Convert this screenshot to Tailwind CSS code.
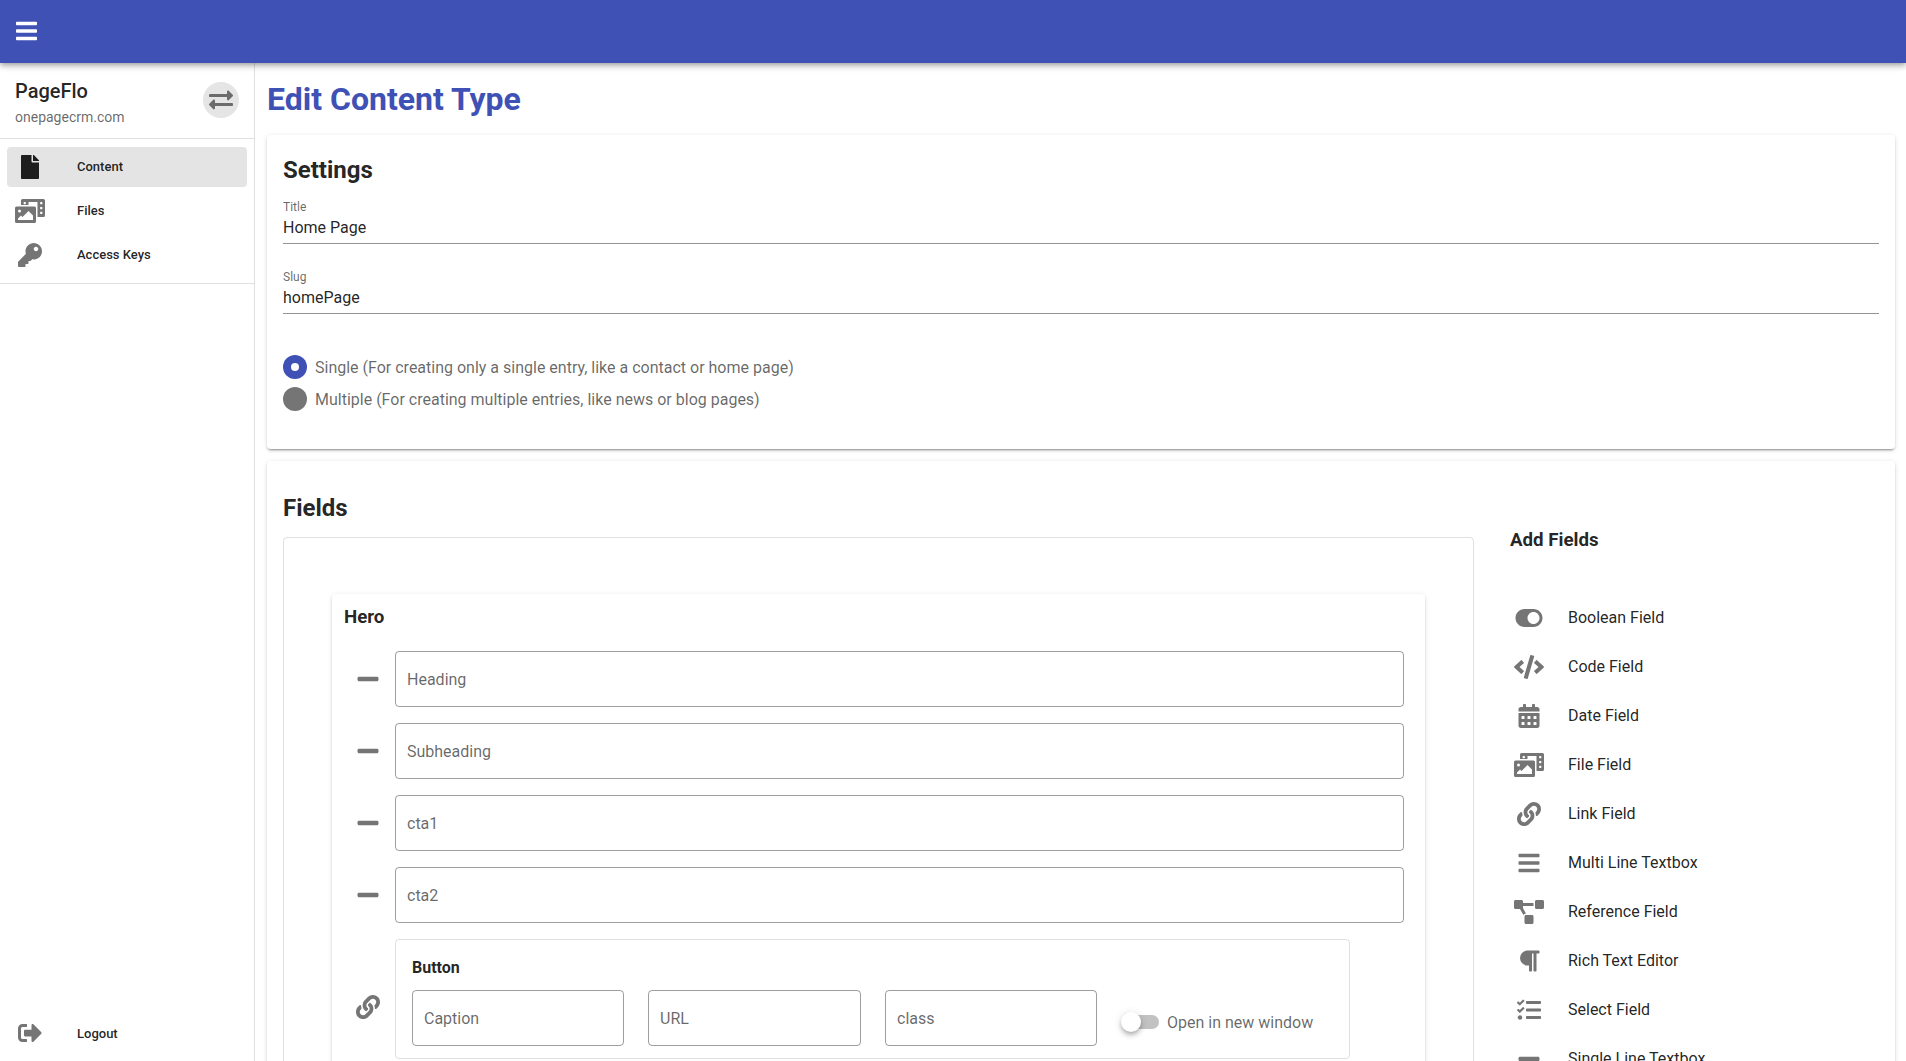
<!DOCTYPE html>
<html lang="en">
<head>
<meta charset="utf-8">
<title>Edit Content Type</title>
<script src="https://cdn.jsdelivr.net/npm/@tailwindcss/browser@4"></script>
</head>
<body class="h-[1061px] overflow-hidden bg-white font-[Roboto,sans-serif] text-base text-black/87">
<svg class="hidden">
  <symbol id="bars" viewBox="0 0 448 512"><path d="M16 132h416c8.837 0 16-7.163 16-16V76c0-8.837-7.163-16-16-16H16C7.163 60 0 67.163 0 76v40c0 8.837 7.163 16 16 16zm0 160h416c8.837 0 16-7.163 16-16v-40c0-8.837-7.163-16-16-16H16c-8.837 0-16 7.163-16 16v40c0 8.837 7.163 16 16 16zm0 160h416c8.837 0 16-7.163 16-16v-40c0-8.837-7.163-16-16-16H16c-8.837 0-16 7.163-16 16v40c0 8.837 7.163 16 16 16z"/></symbol>
  <symbol id="exchange" viewBox="0 0 512 512"><path d="M0 168v-16c0-13.255 10.745-24 24-24h360V80c0-21.367 25.899-32.042 40.971-16.971l80 80c9.372 9.373 9.372 24.569 0 33.941l-80 80C409.956 271.982 384 261.456 384 240v-48H24c-13.255 0-24-10.745-24-24zm488 152H128v-48c0-21.314-25.862-32.08-40.971-16.971l-80 80c-9.372 9.373-9.372 24.569 0 33.941l80 80C102.057 463.997 128 453.437 128 432v-48h360c13.255 0 24-10.745 24-24v-16c0-13.255-10.745-24-24-24z"/></symbol>
  <symbol id="file" viewBox="0 0 384 512"><path d="M224 136V0H24C10.7 0 0 10.7 0 24v464c0 13.3 10.7 24 24 24h336c13.3 0 24-10.7 24-24V160H248c-13.2 0-24-10.8-24-24zm160-14.1v6.1H256V0h6.1c6.400 0 12.500 2.500 17 7l97.900 98c4.500 4.500 7 10.600 7 16.900z"/></symbol>
  <symbol id="media" viewBox="0 0 640 512"><path d="M608 0H160a32 32 0 0 0-32 32v96h160V64h192v320h128a32 32 0 0 0 32-32V32a32 32 0 0 0-32-32zM232 103a9 9 0 0 1-9 9h-30a9 9 0 0 1-9-9V73a9 9 0 0 1 9-9h30a9 9 0 0 1 9 9zm352 208a9 9 0 0 1-9 9h-30a9 9 0 0 1-9-9v-30a9 9 0 0 1 9-9h30a9 9 0 0 1 9 9zm0-104a9 9 0 0 1-9 9h-30a9 9 0 0 1-9-9v-30a9 9 0 0 1 9-9h30a9 9 0 0 1 9 9zm0-104a9 9 0 0 1-9 9h-30a9 9 0 0 1-9-9V73a9 9 0 0 1 9-9h30a9 9 0 0 1 9 9zm-168 57H32a32 32 0 0 0-32 32v288a32 32 0 0 0 32 32h384a32 32 0 0 0 32-32V192a32 32 0 0 0-32-32zM96 224a32 32 0 1 1-32 32 32 32 0 0 1 32-32zm288 224H64v-32l64-64 32 32 128-128 96 96z"/></symbol>
  <symbol id="key" viewBox="0 0 512 512"><path d="M512 176.001C512 273.203 433.202 352 336 352c-11.220 0-22.190-1.062-32.827-3.069l-24.012 27.014A23.999 23.999 0 0 1 261.223 384H224v40c0 13.255-10.745 24-24 24h-40v40c0 13.255-10.745 24-24 24H24c-13.255 0-24-10.745-24-24v-78.059c0-6.365 2.529-12.470 7.029-16.971l161.802-161.802C163.108 213.814 160 195.271 160 176 160 78.798 238.797.001 335.999 0 433.488-.001 512 78.511 512 176.001zM336 128c0 26.510 21.490 48 48 48s48-21.490 48-48-21.490-48-48-48-48 21.490-48 48z"/></symbol>
  <symbol id="logout" viewBox="0 0 512 512"><path d="M497 273L329 441c-15 15-41 4.500-41-17v-96H152c-13.300 0-24-10.700-24-24v-96c0-13.300 10.700-24 24-24h136V88c0-21.400 25.900-32 41-17l168 168c9.300 9.400 9.300 24.600 0 34zM192 436v-40c0-6.600-5.400-12-12-12H96c-17.700 0-32-14.300-32-32V160c0-17.700 14.300-32 32-32h84c6.600 0 12-5.400 12-12V76c0-6.600-5.400-12-12-12H96c-53 0-96 43-96 96v192c0 53 43 96 96 96h84c6.600 0 12-5.400 12-12z"/></symbol>
  <symbol id="minus" viewBox="0 0 448 512"><path d="M416 208H32c-17.670 0-32 14.330-32 32v32c0 17.670 14.330 32 32 32h384c17.670 0 32-14.330 32-32v-32c0-17.670-14.330-32-32-32z"/></symbol>
  <symbol id="link" viewBox="0 0 512 512"><path d="M326.612 185.391c59.747 59.809 58.927 155.698.36 214.590-.11.12-.24.25-.36.37l-67.200 67.200c-59.270 59.270-155.699 59.262-214.960 0-59.270-59.260-59.270-155.700 0-214.960l37.106-37.106c9.840-9.840 26.786-3.300 27.294 10.606.648 17.722 3.826 35.527 9.690 52.721 1.986 5.822.567 12.262-3.783 16.612l-13.087 13.087c-28.026 28.026-28.905 73.660-1.155 101.960 28.024 28.579 74.086 28.749 102.325.51l67.200-67.190c28.191-28.191 28.073-73.757 0-101.830-3.701-3.694-7.429-6.564-10.341-8.569a16.037 16.037 0 0 1-6.947-12.606c-.396-10.567 3.348-21.456 11.698-29.806l21.054-21.055c5.521-5.521 14.182-6.199 20.584-1.731a152.482 152.482 0 0 1 20.522 17.197zM467.547 44.449c-59.261-59.262-155.690-59.270-214.960 0l-67.200 67.200c-.12.12-.25.25-.36.37-58.566 58.892-59.387 154.781.36 214.590a152.454 152.454 0 0 0 20.521 17.196c6.402 4.468 15.064 3.789 20.584-1.731l21.054-21.055c8.350-8.350 12.094-19.239 11.698-29.806a16.037 16.037 0 0 0-6.947-12.606c-2.912-2.005-6.640-4.875-10.341-8.569-28.073-28.073-28.191-73.639 0-101.830l67.200-67.190c28.239-28.239 74.300-28.069 102.325.51 27.750 28.300 26.872 73.934-1.155 101.960l-13.087 13.087c-4.350 4.350-5.769 10.790-3.783 16.612 5.864 17.194 9.042 34.999 9.690 52.721.509 13.906 17.454 20.446 27.294 10.606l37.106-37.106c59.271-59.259 59.271-155.699.001-214.959z"/></symbol>
  <symbol id="toggle" viewBox="0 0 576 512"><path d="M384 64H192C86 64 0 150 0 256s86 192 192 192h192c106 0 192-86 192-192S490 64 384 64zm0 320c-70.800 0-128-57.300-128-128 0-70.800 57.300-128 128-128 70.800 0 128 57.300 128 128 0 70.800-57.300 128-128 128z"/></symbol>
  <symbol id="code" viewBox="0 0 640 512"><path d="M278.900 511.500l-61-17.700c-6.400-1.800-10-8.500-8.200-14.900L346.200 8.700c1.800-6.400 8.500-10 14.900-8.200l61 17.700c6.400 1.800 10 8.500 8.200 14.900L293.800 503.300c-1.900 6.400-8.500 10.100-14.900 8.200zm-114-112.200l43.500-46.400c4.600-4.900 4.300-12.700-.8-17.200L117 256l90.600-79.700c5.100-4.500 5.500-12.300.8-17.200l-43.500-46.400c-4.500-4.800-12.100-5.100-17-.5L3.800 247.200c-5.100 4.700-5.100 12.800 0 17.500l144.100 135.100c4.900 4.600 12.500 4.400 17-.5zm327.200.6l144.100-135.100c5.100-4.700 5.100-12.800 0-17.500L492.100 112.100c-4.800-4.500-12.400-4.300-17 .5L431.600 159c-4.600 4.900-4.300 12.700.8 17.200L523 256l-90.600 79.700c-5.100 4.500-5.500 12.300-.8 17.200l43.500 46.400c4.500 4.900 12.100 5.100 17 .6z"/></symbol>
  <symbol id="calendar" viewBox="0 0 448 512"><path fill-rule="evenodd" d="M0 464c0 26.500 21.500 48 48 48h352c26.500 0 48-21.500 48-48V192H0zM76 256h40a12 12 0 0 1 12 12v40a12 12 0 0 1-12 12H76a12 12 0 0 1-12-12v-40a12 12 0 0 1 12-12zM204 256h40a12 12 0 0 1 12 12v40a12 12 0 0 1-12 12h-40a12 12 0 0 1-12-12v-40a12 12 0 0 1 12-12zM332 256h40a12 12 0 0 1 12 12v40a12 12 0 0 1-12 12h-40a12 12 0 0 1-12-12v-40a12 12 0 0 1 12-12zM76 384h40a12 12 0 0 1 12 12v40a12 12 0 0 1-12 12H76a12 12 0 0 1-12-12v-40a12 12 0 0 1 12-12zM204 384h40a12 12 0 0 1 12 12v40a12 12 0 0 1-12 12h-40a12 12 0 0 1-12-12v-40a12 12 0 0 1 12-12zM332 384h40a12 12 0 0 1 12 12v40a12 12 0 0 1-12 12h-40a12 12 0 0 1-12-12v-40a12 12 0 0 1 12-12zM400 64h-48V16c0-8.800-7.200-16-16-16h-32c-8.800 0-16 7.200-16 16v48H160V16c0-8.800-7.200-16-16-16h-32c-8.800 0-16 7.200-16 16v48H48C21.500 64 0 85.500 0 112v48h448v-48c0-26.500-21.500-48-48-48z"/></symbol>
  <symbol id="diagram" viewBox="0 0 640 512"><path d="M384 320H256c-17.670 0-32 14.330-32 32v128c0 17.670 14.330 32 32 32h128c17.670 0 32-14.330 32-32V352c0-17.670-14.330-32-32-32zM192 32c0-17.670-14.330-32-32-32H32C14.330 0 0 14.330 0 32v128c0 17.670 14.330 32 32 32h95.720l73.160 128.040C211.980 300.980 232.400 288 256 288h.28L192 175.510V128h224V64H192V32zM608 0H480c-17.670 0-32 14.330-32 32v128c0 17.670 14.330 32 32 32h128c17.670 0 32-14.330 32-32V32c0-17.670-14.330-32-32-32z"/></symbol>
  <symbol id="paragraph" viewBox="0 0 448 512"><path d="M448 48v32a16 16 0 0 1-16 16h-48v368a16 16 0 0 1-16 16h-32a16 16 0 0 1-16-16V96h-32v368a16 16 0 0 1-16 16h-32a16 16 0 0 1-16-16V352h-32a160 160 0 0 1 0-320h240a16 16 0 0 1 16 16z"/></symbol>
  <symbol id="tasks" viewBox="0 0 512 512"><path d="M139.610 35.500a12 12 0 0 0-17 0L58.930 98.810l-22.700-22.120a12 12 0 0 0-17 0L3.530 92.410a12 12 0 0 0 0 17l47.590 47.400a12.780 12.780 0 0 0 17.610 0l15.590-15.620L156.520 69.090a12.090 12.090 0 0 0 .09-17zm0 159.190a12 12 0 0 0-17 0l-63.680 63.720-22.700-22.100a12 12 0 0 0-17 0L3.530 252a12 12 0 0 0 0 17L51 316.500a12.770 12.770 0 0 0 17.600 0l15.700-15.690 72.200-72.220a12 12 0 0 0 .09-16.900zM64 368c-26.490 0-48.590 21.500-48.590 48S37.530 464 64 464a48 48 0 0 0 0-96zm432 16H208a16 16 0 0 0-16 16v32a16 16 0 0 0 16 16h288a16 16 0 0 0 16-16v-32a16 16 0 0 0-16-16zm0-320H208a16 16 0 0 0-16 16v32a16 16 0 0 0 16 16h288a16 16 0 0 0 16-16V80a16 16 0 0 0-16-16zm0 160H208a16 16 0 0 0-16 16v32a16 16 0 0 0 16 16h288a16 16 0 0 0 16-16v-32a16 16 0 0 0-16-16z"/></symbol>
</svg>

<header class="relative z-10 flex h-[63px] items-center bg-[#3f51b5] px-4 text-white shadow-[0_2px_4px_-1px_rgba(0,0,0,0.2),0_4px_5px_rgba(0,0,0,0.14),0_1px_10px_rgba(0,0,0,0.12)]">
  <svg class="-mt-px h-6 w-[21px] fill-current"><use href="#bars"/></svg>
</header>

<div class="flex h-[998px]">
  <aside class="flex w-[255px] shrink-0 flex-col border-r border-black/12">
    <div class="flex h-[76px] items-center justify-between border-b border-black/12 px-[15px]">
      <div class="pt-1">
        <div class="text-xl leading-6 font-medium">PageFlo</div>
        <div class="mt-1 text-sm leading-5 text-black/60">onepagecrm.com</div>
      </div>
      <button class="-mt-0.5 flex size-9 items-center justify-center rounded-full bg-[#e5e5e5]"><svg class="size-6 fill-[#6b6b6b]"><use href="#exchange"/></svg></button>
    </div>
    <nav class="flex h-[145px] flex-col gap-1 border-b border-black/12 px-[7px] pt-2 text-[13px] font-medium">
      <a class="flex h-10 items-center rounded bg-[#e4e4e4] pl-2"><svg class="mr-8 h-6 w-[30px] fill-[#1e1e1e]"><use href="#file"/></svg>Content</a>
      <a class="flex h-10 items-center pl-2"><svg class="mr-8 h-6 w-[30px] fill-[#757575]"><use href="#media"/></svg>Files</a>
      <a class="flex h-10 items-center pl-2"><svg class="mr-8 h-6 w-[30px] fill-[#757575]"><use href="#key"/></svg>Access Keys</a>
    </nav>
    <a class="mt-auto mb-2 flex h-10 items-center pl-[15px] text-[13px] font-medium"><svg class="mr-8 h-6 w-[30px] fill-[#757575]"><use href="#logout"/></svg><span class="pt-px">Logout</span></a>
  </aside>

  <main class="flex grow flex-col overflow-hidden pr-[11px] pl-3">
    <h1 class="flex h-[72px] shrink-0 items-center text-[32px] font-bold text-[#3f51b5]">Edit Content Type</h1>

    <section class="h-[314px] shrink-0 rounded bg-white px-4 shadow-[0_3px_1px_-2px_rgba(0,0,0,0.2),0_2px_2px_rgba(0,0,0,0.14),0_1px_5px_rgba(0,0,0,0.12)]">
      <h2 class="pt-[19px] text-2xl leading-8 font-bold">Settings</h2>
      <div class="mt-[13px] h-[45px] border-b border-black/42">
        <div class="text-xs leading-4 text-black/60">Title</div>
        <div class="pt-px leading-6">Home Page</div>
      </div>
      <div class="mt-[25px] h-[45px] border-b border-black/42">
        <div class="text-xs leading-4 text-black/60">Slug</div>
        <div class="pt-px leading-6">homePage</div>
      </div>
      <div class="mt-[41px] flex flex-col gap-2 text-black/60">
        <div class="flex h-6 items-center gap-2"><span class="flex size-6 items-center justify-center rounded-full bg-[#3f51b5]"><span class="size-2 rounded-full bg-white"></span></span><span class="pt-px">Single (For creating only a single entry, like a contact or home page)</span></div>
        <div class="flex h-6 items-center gap-2"><span class="size-6 rounded-full bg-[#757575]"></span><span class="pt-px">Multiple (For creating multiple entries, like news or blog pages)</span></div>
      </div>
    </section>

    <section class="mt-3 flex h-[700px] shrink-0 rounded bg-white px-4 shadow-[0_3px_1px_-2px_rgba(0,0,0,0.2),0_2px_2px_rgba(0,0,0,0.14),0_1px_5px_rgba(0,0,0,0.12)]">
      <div class="w-[1191px] shrink-0">
        <h2 class="pt-[31px] text-2xl leading-8 font-bold">Fields</h2>
        <div class="mt-[13px] h-[700px] rounded border border-black/12 px-12 pt-14">
          <div class="h-[640px] rounded bg-white pr-[21px] pl-3 shadow-[0_3px_1px_-2px_rgba(0,0,0,0.2),0_2px_2px_rgba(0,0,0,0.14),0_1px_5px_rgba(0,0,0,0.12)]">
            <h3 class="h-[57px] pt-2.5 text-[18.72px] leading-[26px] font-bold">Hero</h3>
            <div class="flex flex-col gap-4 text-black/60">
              <div class="flex items-center"><svg class="mr-[15px] ml-3 size-6 fill-[#757575]"><use href="#minus"/></svg><div class="flex h-14 grow items-center rounded border border-black/38 px-[11px] pt-0.5">Heading</div></div>
              <div class="flex items-center"><svg class="mr-[15px] ml-3 size-6 fill-[#757575]"><use href="#minus"/></svg><div class="flex h-14 grow items-center rounded border border-black/38 px-[11px] pt-0.5">Subheading</div></div>
              <div class="flex items-center"><svg class="mr-[15px] ml-3 size-6 fill-[#757575]"><use href="#minus"/></svg><div class="flex h-14 grow items-center rounded border border-black/38 px-[11px] pt-0.5">cta1</div></div>
              <div class="flex items-center"><svg class="mr-[15px] ml-3 size-6 fill-[#757575]"><use href="#minus"/></svg><div class="flex h-14 grow items-center rounded border border-black/38 px-[11px] pt-0.5">cta2</div></div>
              <div class="flex items-center"><svg class="mt-4 mr-[15px] ml-3 size-6 fill-[#757575]"><use href="#link"/></svg>
                <div class="h-[120px] w-[955px] rounded border border-black/12 px-4">
                  <h4 class="pt-4 leading-6 font-bold text-black/87">Button</h4>
                  <div class="mt-2.5 flex">
                    <div class="mr-6 flex h-14 w-[212px] items-center rounded border border-black/38 px-[11px] pt-0.5">Caption</div>
                    <div class="mr-6 flex h-14 w-[213px] items-center rounded border border-black/38 px-[11px] pt-0.5">URL</div>
                    <div class="mr-6 flex h-14 w-[212px] items-center rounded border border-black/38 px-[11px] pt-0.5">class</div>
                    <div class="mt-2 flex items-center">
                      <span class="relative mr-2 ml-0.5 h-3.5 w-9 rounded-full bg-black/24"><span class="absolute -top-[3px] -left-[2px] size-5 rounded-full bg-white shadow-[0_2px_4px_-1px_rgba(0,0,0,0.2),0_4px_5px_rgba(0,0,0,0.14),0_1px_10px_rgba(0,0,0,0.12)]"></span></span><span class="pt-px">Open in new window</span>
                    </div>
                  </div>
                </div>
              </div>
            </div>
          </div>
        </div>
      </div>
      <div class="pl-9">
        <h3 class="pt-[65px] text-[18.72px] leading-7 font-bold">Add Fields</h3>
        <div class="mt-[39px] flex flex-col">
          <div class="flex h-[49px] items-center"><svg class="mr-6 ml-1 h-6 w-[30px] fill-[#757575]"><use href="#toggle"/></svg>Boolean Field</div>
          <div class="flex h-[49px] items-center"><svg class="mr-6 ml-1 h-6 w-[30px] fill-[#757575]"><use href="#code"/></svg>Code Field</div>
          <div class="flex h-[49px] items-center"><svg class="mr-6 ml-1 h-6 w-[30px] fill-[#757575]"><use href="#calendar"/></svg>Date Field</div>
          <div class="flex h-[49px] items-center"><svg class="mr-6 ml-1 h-6 w-[30px] fill-[#757575]"><use href="#media"/></svg>File Field</div>
          <div class="flex h-[49px] items-center"><svg class="mr-6 ml-1 h-6 w-[30px] fill-[#757575]"><use href="#link"/></svg>Link Field</div>
          <div class="flex h-[49px] items-center"><svg class="mr-6 ml-1 h-6 w-[30px] fill-[#757575]"><use href="#bars"/></svg>Multi Line Textbox</div>
          <div class="flex h-[49px] items-center"><svg class="mr-6 ml-1 h-6 w-[30px] fill-[#757575]"><use href="#diagram"/></svg>Reference Field</div>
          <div class="flex h-[49px] items-center"><svg class="mr-6 ml-1 h-6 w-[30px] fill-[#757575]"><use href="#paragraph"/></svg>Rich Text Editor</div>
          <div class="flex h-[49px] items-center"><svg class="mr-6 ml-1 h-6 w-[30px] fill-[#757575]"><use href="#tasks"/></svg>Select Field</div>
          <div class="flex h-[49px] items-center"><svg class="mr-6 ml-1 h-6 w-[30px] fill-[#757575]"><use href="#minus"/></svg>Single Line Textbox</div>
        </div>
      </div>
    </section>
  </main>
</div>
</body>
</html>
